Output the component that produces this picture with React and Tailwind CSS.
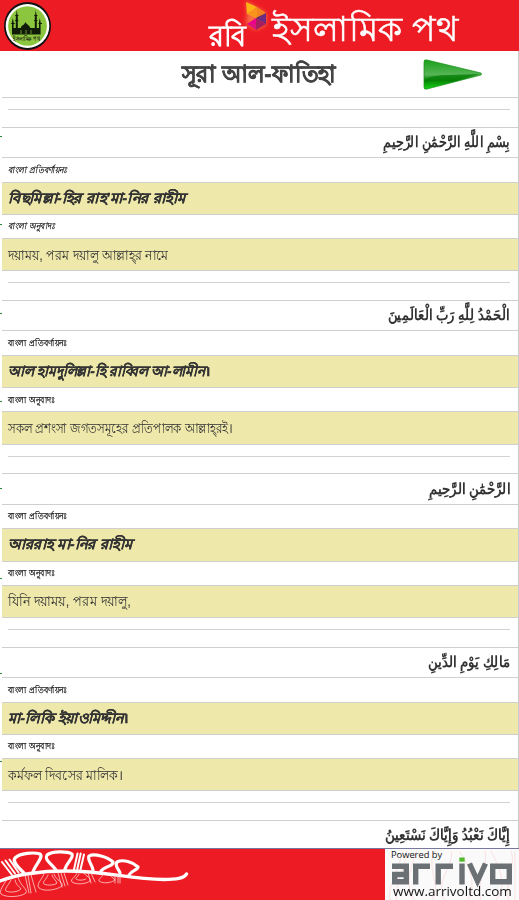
import React from "react";

const verses = [
  {
    arabic: "بِسْمِ اللَّهِ الرَّحْمَٰنِ الرَّحِيمِ",
    reading: "বিছমিল্লা-হির রাহ'মা-নির রাহীম",
    meaning: "দয়াময়, পরম দয়ালু আল্লাহ্‌র নামে",
    slanted: true,
    arabicFit: "scale-x-[0.85]",
    readingFit: "scale-x-[1.06]",
    meaningFit: "scale-x-[0.89]",
    ticks: [9, 97],
  },
  {
    arabic: "الْحَمْدُ لِلَّهِ رَبِّ الْعَالَمِينَ",
    reading: "আল হামদুলিল্লা-হি রাব্বিল আ-লামীন।",
    meaning: "সকল প্রশংসা জগতসমূহের প্রতিপালক আল্লাহ্‌রই।",
    arabicFit: "scale-x-[0.88]",
    readingFit: "scale-x-[0.98]",
    meaningFit: "scale-x-[0.836]",
    ticks: [13, 101],
  },
  {
    arabic: "الرَّحْمَٰنِ الرَّحِيمِ",
    reading: "আররাহ মা-নির রাহীম",
    meaning: "যিনি দয়াময়, পরম দয়ালু,",
    arabicFit: "scale-x-[0.89]",
    readingFit: "scale-x-[1.05]",
    meaningFit: "scale-x-[0.92]",
    ticks: [15, 105],
  },
  {
    arabic: "مَالِكِ يَوْمِ الدِّينِ",
    reading: "মা-লিকি ইয়াওমিদ্দীন।",
    meaning: "কর্মফল দিবসের মালিক।",
    arabicFit: "scale-x-[0.89]",
    readingFit: "scale-x-[1.03]",
    meaningFit: "scale-x-[0.89]",
    ticks: [26, 114],
  },
];

function Arabic({ children, fit }) {
  return (
    <div dir="rtl" className="flex h-[30.33px] items-center border-t border-[#cfcfcf] pr-2 text-[15px] font-bold whitespace-nowrap text-[#333]">
      <span className={`origin-right ${fit}`}>{children}</span>
    </div>
  );
}

function Label({ children, slanted }) {
  return (
    <div className={`flex items-center border-t border-[#cfcfcf] pt-px pl-[6px] text-[9px] whitespace-nowrap text-[#111] ${slanted ? "italic" : ""}`}>
      <span className="origin-left scale-x-[0.86] [-webkit-text-stroke:0.25px_#222]">{children}</span>
    </div>
  );
}

function Verse({ verse }) {
  return (
    <section className="relative grid h-[173.33px] grid-rows-[30.33px_24.67px_32.2px_24.3px_32.2px_29.63px]">
      {verse.ticks.map((top) => (
        <i key={top} className="absolute -left-[2px] h-px w-[2px] bg-[#2c8a3a]" style={{ top }} />
      ))}
      <Arabic fit={verse.arabicFit}>{verse.arabic}</Arabic>
      <Label slanted={verse.slanted}>বাংলা প্রতিবর্ণায়নঃ</Label>
      <div className="flex items-center border-t border-[#cfcfcf] bg-[#eee8aa] pl-[6px] text-[14px] font-bold whitespace-nowrap text-[#333] italic">
        <span className={`origin-left [-webkit-text-stroke:0.3px_#333] ${verse.readingFit}`}>{verse.reading}</span>
      </div>
      <Label slanted={verse.slanted}>বাংলা অনুবাদঃ</Label>
      <div className="flex items-center border-t border-[#cfcfcf] bg-[#eee8aa] pt-px pl-[6px] text-[14px] whitespace-nowrap text-[#333]">
        <span className={`origin-left ${verse.meaningFit}`}>{verse.meaning}</span>
      </div>
      <div className="border-t border-[#cfcfcf] pr-2 pl-[6px] pt-[11px]">
        <div className="h-px bg-[#d3d3d3]" />
      </div>
    </section>
  );
}

function MosqueBadge() {
  return (
    <svg className="ml-1 h-[50px] w-[48px] shrink-0" viewBox="0 0 48 50">
      <ellipse cx="23.5" cy="26" rx="23.5" ry="24" fill="#111" />
      <ellipse cx="23.5" cy="26" rx="21.8" ry="22" fill="#fff" />
      <ellipse cx="23.5" cy="26" rx="19.4" ry="19.8" fill="#8cc63f" />
      <g fill="#101b08">
        <path d="M8 34.500V22l.8-4 .8 4v6h2.200V17l1-7 1 7v11h3c.5-3 3.500-2.500 4.500-6 1 2.500 4.500 3 5 6h4.500V17l1-7 1 7v11h2.200v-6l.8-4 .8 4v12.500z" />
        <path d="M11.200 15h3.200v1h-3.200zM11.200 20h3.200v1h-3.200zM30.200 15h3.200v1h-3.200zM30.200 20h3.200v1h-3.200zM34.500 23h3.500v1h-3.500zM7.200 23h3.500v1H7.200z" />
      </g>
      <path d="M17 34v-4m5 4v-4m5 4v-4" stroke="#8cc63f" strokeWidth=".7" />
      <text x="22.5" y="41" textAnchor="middle" fontSize="6.5" textLength="27" lengthAdjust="spacingAndGlyphs" fill="#111" stroke="#111" strokeWidth=".15">ইসলামিক পথ</text>
    </svg>
  );
}

function RobiMark() {
  return (
    <svg className="absolute top-0 left-[243px] h-[34px] w-[28px] overflow-visible" viewBox="0 0 28 34">
      <path d="M3 1l20 12v12l-10 5-10-6 1-10z" fill="#ff9a55" opacity=".65" style={{ filter: "blur(2px)" }} />
      <path d="M3 2l11 5-10 7z" fill="#fdb515" />
      <path d="M14 7l9 6-9 6z" fill="#f58220" />
      <path d="M4 14l10 4.500V7z" fill="#f7941d" />
      <path d="M23 13v11l-9-5z" fill="#6c2c83" />
      <path d="M23 13l-9 6-1-1z" fill="#3f1f68" />
      <path d="M13 18v6l-9 0z" fill="#ec008c" />
      <path d="M4 24h9v6z" fill="#e0127c" />
      <path d="M13 18l10 6-10 6z" fill="#a51e5f" />
    </svg>
  );
}

function Vine() {
  return (
    <svg className="h-[51px] w-[190px]" viewBox="0 0 190 51" fill="none" stroke="#fff" strokeLinecap="round" strokeLinejoin="round">
      <path d="M0 32C16 26 38 22 66 22c40 0 62 8 98 8.500 12 0 20-1 22.500-5.500" strokeWidth="3.4" />
      <path d="M24 24C18 18 12 13 15 9c5-5 19-6 25-4 4 3-5 11-7 18M56 21C51 14 44 11 47 6c5-4 20-4 25-1 2 4-5 8-7 15M93 21c-1-6-6-10-4-14 5-3 19 1 24 6 1 4-8 4-12 9M120 24c-1-4-6-7-3-11 6-3 16 0 21 5 0 3-6 3-9 8" strokeWidth="3.2" />
      <path d="M2 13l10 13M5.500 11.500l9.500 13M9.500 10.500l9 13M77.500 4.500l-3.500 16M80.700 4.500l-3.500 16M84 5.500l-3.500 15" strokeWidth="2" />
      <g stroke="#ffd0d0" strokeWidth=".8">
        <path d="M7 30C3 37-1 42 1 45c5 4 20 3 25-1 2-4-6-7-8-16M11 31c-3 6-7 9-5 11 4 2 12 1 15-2-2-3-5-4-6-9M44 25c-3 7-8 10-5 14 5 4 18 2 23-2 2-4-6-5-8-12M48 26c-2 5-6 7-4 9 4 2 11 1 13-1-1-3-4-4-5-8M77 24c-2 5-7 6-5 9 5 3 14 2 18-1 1-4-4-4-6-8M79 25c-1 3-4 4-3 5 3 2 8 1 10 0M103 25c-1 4-5 5-4 7 4 3 12 2 16-1-1-2-4-2-4-5" />
        <path d="M25 26l4 18M28 26l3 18M31 26l5 17M58 24l4 14M61 24l4 13M64 24l4 12M88 24l3 10M91 24l4 9M115 26v8M118 26v8M120 27v7" />
      </g>
    </svg>
  );
}

function Sponsor() {
  return (
    <div className="relative h-[52px] w-[134px] overflow-hidden bg-[#fafafa] font-['Open_Sans',sans-serif] text-[#111]">
      <svg className="absolute inset-0 h-full w-full" viewBox="0 0 134 52" fill="none">
        <g stroke="#fbd5d5" strokeWidth=".7">
          <path d="M6 52C0 42 14 20 18 2M12 52C8 38 20 20 22 2M30 52C20 40 24 20 32 2M46 52c12-14-6-34 4-50M60 52c-12-18 10-36 6-50M82 52c10-14 4-34-8-50M96 52c-6-18 8-36 4-50M110 52c14-14 4-34-4-50M124 52c-6-18 8-36 2-50M130 52V2" />
        </g>
        <g stroke="#6a7074" strokeWidth="5.4">
          <path d="M7 17.200H21.300V35.500M21.300 32.800H9.700V25.500H21.300M30.700 35.500V17.200H45M53.200 35.500V17.200H68M77 35.500V14.500" />
          <path d="M84.500 14.500l8 17.500 8-17.500" />
          <path d="M107.700 17.200h16.600v15.600h-16.600z" />
        </g>
        <path d="M74.300 8.500h5.400v4.200h-5.400z" fill="#55b92e" />
      </svg>
      <span className="absolute top-0 left-[6px] text-[9.300px] leading-[11px] whitespace-nowrap">Powered by</span>
      <span className="absolute bottom-[2px] left-[8px] origin-left scale-x-[1.08] text-[12.500px] leading-[14px] whitespace-nowrap">www.arrivoltd.com</span>
    </div>
  );
}

export default function App() {
  return (
    <div className="flex h-[900px] w-[519px] flex-col overflow-hidden bg-white font-['Liberation_Sans','Noto_Sans',sans-serif]">
      <header className="relative flex h-[51px] shrink-0 bg-[#ed1c24] text-white">
        <MosqueBadge />
        <RobiMark />
        <span className="absolute top-[17px] left-[209px] origin-left scale-x-[0.93] text-[29px] leading-[38px] font-bold whitespace-nowrap">রবি</span>
        <span className="absolute top-[7px] left-[272px] origin-left scale-x-[1.02] text-[34px] leading-[44px] whitespace-nowrap [-webkit-text-stroke:0.5px_white]">ইসলামিক পথ</span>
      </header>
      <main className="h-[797px] shrink-0 overflow-hidden border-r border-[#ccc] pl-[2px]">
        <div className="relative flex h-[46px] items-center justify-center pr-[1px]">
          <h1 className="scale-x-[0.965] text-[23px] font-bold whitespace-nowrap text-[#444] [-webkit-text-stroke:0.5px_#444]">সূরা আল-ফাতিহা</h1>
          <svg className="absolute top-[7px] left-[420px] h-[34px] w-[62px]" viewBox="0 0 62 34">
            <defs>
              <linearGradient id="arrow" x2="0" y2="1">
                <stop stopColor="#19a119" />
                <stop offset=".5" stopColor="#55b455" />
                <stop offset=".7" stopColor="#078507" />
                <stop offset="1" stopColor="#16d516" />
              </linearGradient>
            </defs>
            <path d="M2 4q0-3 3-2l54 13q1 1 0 2L5 31q-3 1-3-2z" fill="url(#arrow)" stroke="#168c16" strokeWidth=".7" />
            <path d="M3 21q8-4 24-4l31-1L30 24Q16 20 3 24z" fill="#067f06" opacity=".75" />
          </svg>
        </div>
        <div className="h-[29.700px] border-t border-[#cfcfcf] pr-2 pl-[6px] pt-[11px]">
          <div className="h-px bg-[#d3d3d3]" />
        </div>
        {verses.map((verse) => (
          <Verse key={verse.arabic} verse={verse} />
        ))}
        <Arabic fit="scale-x-[0.90]">إِيَّاكَ نَعْبُدُ وَإِيَّاكَ نَسْتَعِينُ</Arabic>
      </main>
      <footer className="flex h-[52px] shrink-0 justify-between border-t border-[#7777a0] bg-[#ed1c24]">
        <Vine />
        <Sponsor />
      </footer>
    </div>
  );
}
